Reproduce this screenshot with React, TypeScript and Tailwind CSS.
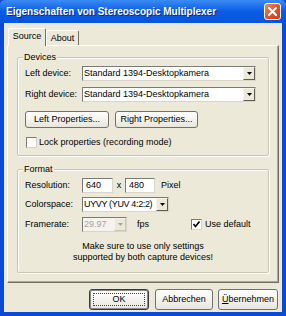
import React from "react";

function Arrow({ disabled }: { disabled?: boolean }) {
  return (
    <svg width="5" height="3" viewBox="0 0 5 3">
      <polygon points="0,0 5,0 2.5,3" fill={disabled ? "#A6A39A" : "#000"} />
    </svg>
  );
}

function Combo({ w, text, disabled, tight }: { w: string; text: string; disabled?: boolean; tight?: boolean }) {
  return (
    <div
      className={`${w} h-[15px] flex items-stretch border border-t-[#7A7A7A] border-l-[#7A7A7A] border-b-[#D8D5C8] border-r-[#D8D5C8] ${
        disabled ? "bg-[#F4F3EE] text-[#A6A39A]" : "bg-white text-black"
      }`}
    >
      <div
        className={`flex-1 flex items-center pl-[1px] leading-none whitespace-nowrap overflow-hidden ${
          tight ? "tracking-[-0.35px]" : ""
        }`}
      >
        {text}
      </div>
      <div
        className={`w-[12px] shrink-0 flex items-center justify-center bg-[#ECE9D8] border border-t-[#F4F3EE] border-l-[#F4F3EE] ${
          disabled ? "border-b-[#C8C5B8] border-r-[#C8C5B8]" : "border-b-[#5E5C55] border-r-[#5E5C55]"
        }`}
      >
        <Arrow disabled={disabled} />
      </div>
    </div>
  );
}

function Input({ w, text }: { w: string; text: string }) {
  return (
    <div
      className={`${w} h-[15px] flex items-center pl-[3px] bg-white border border-t-[#7A7A7A] border-l-[#7A7A7A] border-b-[#D8D5C8] border-r-[#D8D5C8] leading-none`}
    >
      {text}
    </div>
  );
}

function Check({ checked }: { checked?: boolean }) {
  return (
    <div className="w-[11px] h-[11px] bg-white border border-t-[#7A7A7A] border-l-[#7A7A7A] border-b-[#D8D5C8] border-r-[#D8D5C8] flex items-center justify-center">
      {checked && (
        <svg width="7" height="7" viewBox="0 0 7 7">
          <polyline points="0.5,3 2.5,5.5 6.5,0.5" fill="none" stroke="#000" strokeWidth="1.6" />
        </svg>
      )}
    </div>
  );
}

function Btn({ w, h, children, def }: { w: string; h: string; children: React.ReactNode; def?: boolean }) {
  return (
    <div
      className={`${w} ${h} rounded-[3px] border ${
        def ? "border-[#3A3A3A] shadow-[inset_0_0_0_1px_#8A8A8A]" : "border-[#707070]"
      } bg-gradient-to-b from-[#FFFFFF] to-[#E8E6DC] flex items-center justify-center leading-none whitespace-nowrap`}
    >
      {def ? (
        <div className="w-[calc(100%-6px)] h-[calc(100%-6px)] border border-dotted border-[#444] flex items-center justify-center">
          {children}
        </div>
      ) : (
        children
      )}
    </div>
  );
}

function Group({ label, h, className, children }: { label: string; h: string; className?: string; children: React.ReactNode }) {
  return (
    <div
      className={`relative ${h} w-[252px] ml-[9px] border border-[#C8C5B5] rounded-[2px] shadow-[inset_1px_1px_0_#FFFFFF,1px_1px_0_#FFFFFF] ${className ?? ""}`}
    >
      <span className="absolute left-[5px] top-[-6px] px-[1px] bg-[#ECE9D8] leading-[11px]">{label}</span>
      {children}
    </div>
  );
}

export default function App() {
  return (
    <div className="w-[286px] h-[316px] bg-[#0A4AD6] flex flex-col overflow-hidden font-['Liberation_Sans',Arial,sans-serif] text-[9px] text-black">
      {/* Title bar */}
      <div className="h-[23px] flex items-center pl-[6px] pr-[5px] bg-gradient-to-b from-[#3A8CF5] via-[#0A5BE4] to-[#0654DA] rounded-t-[5px]">
        <span className="flex-1 text-white font-bold text-[10px] [text-shadow:1px_1px_0_#0A2A80] whitespace-nowrap">
          Eigenschaften von Stereoscopic Multiplexer
        </span>
        <div className="w-[17px] h-[17px] rounded-[3px] border border-white bg-gradient-to-br from-[#F08A60] via-[#E0542A] to-[#C8401C] flex items-center justify-center">
          <svg width="9" height="9" viewBox="0 0 9 9">
            <path d="M1 1 L8 8 M8 1 L1 8" stroke="#fff" strokeWidth="2" strokeLinecap="square" />
          </svg>
        </div>
      </div>

      {/* Client area */}
      <div className="ml-[4px] w-[278px] h-[289px] bg-[#ECE9D8] flex flex-col px-[3px]">
        {/* Tabs */}
        <div className="mt-[5px] h-[17px] flex items-end ml-[1px]">
          <div className="relative z-10 h-[18px] -mb-[1px] w-[38px] bg-[#ECE9D8] border-t border-l border-white border-r border-r-[#716F64] rounded-t-[2px] flex items-start justify-center pt-[3px] leading-none">
            Source
          </div>
          <div className="h-[15px] w-[33px] border-t border-l border-white border-r border-r-[#716F64] rounded-t-[2px] flex items-start justify-center pt-[3px] leading-none">
            About
          </div>
        </div>

        {/* Panel */}
        <div className="h-[238px] w-[272px] border border-t-white border-l-white border-r-[#716F64] border-b-[#716F64] shadow-[inset_-1px_-1px_0_#ACA899] flex flex-col">
          <Group label="Devices" h="h-[99px]" className="mt-[11px]">
            <div className="flex flex-col pl-[7px] pt-[8px]">
              <div className="h-[15px] flex items-center">
                <span className="w-[57px] leading-none">Left device:</span>
                <Combo w="w-[174px]" text="Standard 1394-Desktopkamera" />
              </div>
              <div className="h-[15px] mt-[6px] flex items-center">
                <span className="w-[57px] leading-none">Right device:</span>
                <Combo w="w-[174px]" text="Standard 1394-Desktopkamera" />
              </div>
              <div className="mt-[9px] flex gap-[6px]">
                <Btn w="w-[84px]" h="h-[17px]">Left Properties...</Btn>
                <Btn w="w-[83px]" h="h-[17px]">Right Properties...</Btn>
              </div>
              <div className="mt-[9px] h-[11px] flex items-center">
                <div className="ml-[1px]">
                  <Check />
                </div>
                <span className="ml-[2px] leading-none">Lock properties (recording mode)</span>
              </div>
            </div>
          </Group>

          <Group label="Format" h="h-[104px]" className="mt-[13px]">
            <div className="flex flex-col pl-[7px] pt-[8px]">
              <div className="h-[15px] flex items-center">
                <span className="w-[57px] leading-none">Resolution:</span>
                <Input w="w-[31px]" text="640" />
                <span className="w-[12px] text-center leading-none">x</span>
                <Input w="w-[30px]" text="480" />
                <span className="ml-[6px] leading-none">Pixel</span>
              </div>
              <div className="h-[15px] mt-[4px] flex items-center">
                <span className="w-[57px] leading-none">Colorspace:</span>
                <Combo w="w-[87px]" text="UYVY (YUV 4:2:2)" tight />
              </div>
              <div className="h-[15px] mt-[5px] flex items-center">
                <span className="w-[57px] leading-none">Framerate:</span>
                <Combo w="w-[45px]" text="29.97" disabled />
                <span className="ml-[10px] w-[54px] leading-none">fps</span>
                <Check checked />
                <span className="ml-[3px] leading-none">Use default</span>
              </div>
              <div className="mt-[9px] -ml-[7px] text-center leading-[11px]">
                Make sure to use only settings
                <br />
                supported by both capture devices!
              </div>
            </div>
          </Group>
        </div>

        {/* Buttons */}
        <div className="mt-[6px] flex justify-end pr-[1px]">
          <Btn w="w-[60px]" h="h-[21px]" def>
            OK
          </Btn>
          <div className="ml-[6px]">
            <Btn w="w-[58px]" h="h-[21px]">Abbrechen</Btn>
          </div>
          <div className="ml-[5px]">
            <Btn w="w-[60px]" h="h-[21px]">
              <span>
                <span className="underline">Ü</span>bernehmen
              </span>
            </Btn>
          </div>
        </div>
      </div>
    </div>
  );
}
